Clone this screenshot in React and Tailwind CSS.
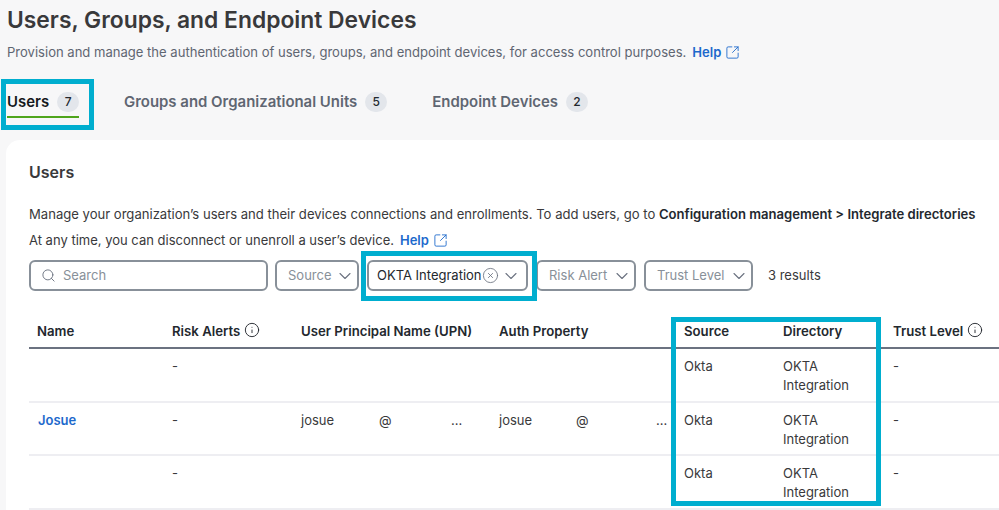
import React from "react";
import { Search, ChevronDown, SquareArrowOutUpRight, Info, CircleX } from "lucide-react";

const Badge = ({ n }) => (
  <span className="flex h-[20px] w-[22px] items-center justify-center rounded-full bg-[#e3e6eb] text-[12px] font-medium text-[#23282e]">{n}</span>
);

const Help = () => (
  <span className="inline-flex items-center gap-[4px] font-semibold text-[#1d69cc]">
    Help
    <SquareArrowOutUpRight className="h-[15px] w-[15px]" strokeWidth={1.4} />
  </span>
);

const Filter = ({ label, w }) => (
  <div className={`flex h-[31px] items-center justify-between rounded-[6px] border-2 border-[#889099] pl-[11px] pr-[2px] text-[13px] text-[#889099] ${w}`}>
    <span className="pt-[1px]">{label}</span>
    <ChevronDown className="h-[20px] w-[20px] text-[#6b7280]" strokeWidth={1.3} />
  </div>
);

const Head = ({ children, w, info }) => (
  <div className={`flex shrink-0 items-center gap-[4px] pl-[8px] text-[13.2px] font-semibold text-[#23282e] ${w}`}>
    {children}
    {info && <Info className="mb-[3px] h-[16px] w-[16px]" strokeWidth={1.4} />}
  </div>
);

const Cell = ({ children, w }) => (
  <div className={`shrink-0 pl-[8px] pt-[8px] text-[13px] leading-[19px] text-[#39393b] ${w}`}>{children}</div>
);

const Row = ({ name, upn, auth }) => (
  <div className="flex h-[53.5px] border-b-2 border-[#eeeef2]">
    <Cell w="w-[135px]">{name && <span className="ml-[1px] font-semibold text-[#1d69cc]">{name}</span>}</Cell>
    <Cell w="w-[129px]">-</Cell>
    <Cell w="w-[198px]">
      {upn && (
        <span className="flex">
          <span className="w-[78px]">josue</span>
          <span className="w-[72px]">@</span>
          <span className="text-[#39393b]">...</span>
        </span>
      )}
    </Cell>
    <Cell w="w-[185px]">
      {auth && (
        <span className="flex">
          <span className="w-[77px]">josue</span>
          <span className="w-[80px]">@</span>
          <span>...</span>
        </span>
      )}
    </Cell>
    <Cell w="w-[99px]">Okta</Cell>
    <Cell w="w-[110px]">OKTA<br />Integration</Cell>
    <Cell w="w-[114px]">-</Cell>
  </div>
);

export default function App() {
  return (
    <div className="relative h-[510px] w-[999px] overflow-hidden bg-[#f7f7f8] font-['Inter',sans-serif]">
      <div className="pl-[7px]">
        <h1 className="pt-[5px] text-[22.85px] font-semibold leading-[30px] text-[#39393b]">Users, Groups, and Endpoint Devices</h1>
        <p className="mt-[7px] flex items-center gap-[6px] text-[13.05px] leading-[20px] text-[#5f6672]">
          Provision and manage the authentication of users, groups, and endpoint devices, for access control purposes.
          <Help />
        </p>
        <div className="mt-[28px] flex items-start text-[14.95px] font-semibold text-[#5f6672]">
          <div className="flex w-[72px] flex-col">
            <div className="flex h-[24px] items-center gap-[8px] text-[#15181c]">Users <Badge n="7" /></div>
            <div className="mt-[2px] h-[2px] bg-[#4fa51c]" />
          </div>
          <div className="ml-[45px] flex h-[24px] items-center gap-[8px]">Groups and Organizational Units <Badge n="5" /></div>
          <div className="ml-[45px] flex h-[24px] items-center gap-[8px]">Endpoint Devices <Badge n="2" /></div>
        </div>
      </div>

      <div className="absolute bottom-0 left-[6px] right-0 top-[140px] rounded-tl-[14px] bg-white pl-[23px]">
        <h2 className="pt-[22px] text-[16px] font-semibold leading-[20px] text-[#39393b]">Users</h2>
        <p className="mt-[22px] whitespace-nowrap text-[13.08px] leading-[20px] text-[#39393b]">
          Manage your organization’s users and their devices connections and enrollments. To add users, go to <b className="font-semibold text-[#23282e]">Configuration management &gt; Integrate directories</b>
        </p>
        <p className="mt-[6px] flex items-center gap-[6px] text-[13px] leading-[20px] text-[#39393b]">
          At any time, you can disconnect or unenroll a user’s device.
          <Help />
        </p>
        <div className="mt-[10px] flex items-center">
          <div className="flex h-[31px] w-[239px] items-center gap-[7px] rounded-[6px] border-2 border-[#889099] pl-[10px] text-[13px] text-[#889099]">
            <Search className="h-[15px] w-[15px] text-[#6b7280]" strokeWidth={1.5} />
            <span className="pt-[1px]">Search</span>
          </div>
          <div className="ml-[7px] flex gap-[8px]">
            <Filter label="Source" w="w-[84px]" />
            <div className="flex h-[31px] w-[161px] items-center rounded-[6px] border-2 border-[#889099] pl-[8px] text-[13px] text-[#23282e]">
              <span className="pt-[1px]">OKTA Integration</span>
              <CircleX className="h-[17px] w-[17px] text-[#6b7280]" strokeWidth={1.2} />
              <ChevronDown className="ml-[2px] h-[20px] w-[20px] text-[#6b7280]" strokeWidth={1.3} />
            </div>
            <Filter label="Risk Alert" w="w-[100px]" />
            <Filter label="Trust Level" w="w-[109px]" />
          </div>
          <span className="ml-[15px] pt-[1px] text-[13px] text-[#39393b]">3 results</span>
        </div>

        <div className="mt-[25px]">
          <div className="flex h-[33px] items-center border-b-2 border-[#6b7280]">
            <Head w="w-[135px]">Name</Head>
            <Head w="w-[129px]" info>Risk Alerts</Head>
            <Head w="w-[198px]">User Principal Name (UPN)</Head>
            <Head w="w-[185px]">Auth Property</Head>
            <Head w="w-[99px]">Source</Head>
            <Head w="w-[110px]">Directory</Head>
            <Head w="w-[114px]" info>Trust Level</Head>
          </div>
          <Row />
          <Row name="Josue" upn auth />
          <Row />
        </div>
      </div>

      <div className="absolute left-[1px] top-[79px] h-[51px] w-[93px] border-[5px] border-[#00aecf]" />
      <div className="absolute left-[361px] top-[251px] h-[50px] w-[176px] border-[5px] border-[#00aecf]" />
      <div className="absolute left-[671px] top-[317px] h-[189px] w-[210px] border-[5px] border-[#00aecf]" />
    </div>
  );
}
